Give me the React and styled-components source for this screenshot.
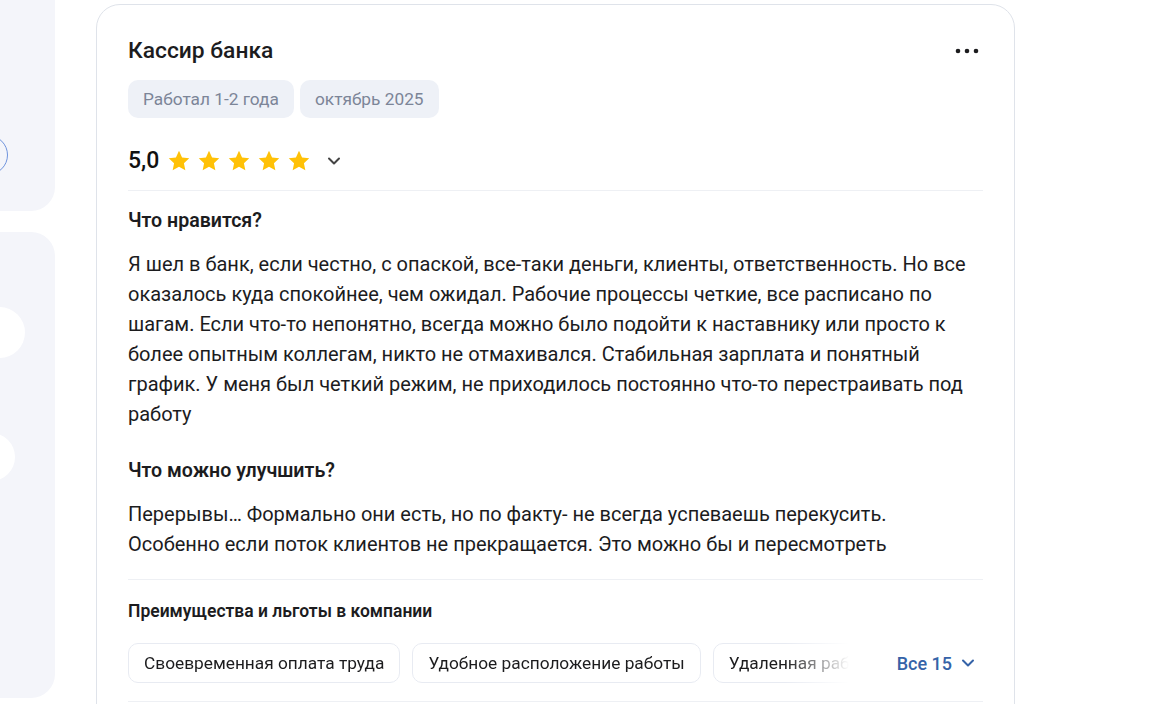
import React from "react";
import styled, { createGlobalStyle } from "styled-components";

const GlobalStyle = createGlobalStyle`
  html, body {
    margin: 0;
    padding: 0;
    background: #ffffff;
    overflow: hidden;
  }
  body {
    font-family: Roboto, "Noto Sans", "Liberation Sans", sans-serif;
    color: #1c1c1e;
  }
`;

const tags = ["Работал 1-2 года", "октябрь 2025"];
const benefits = [
  "Своевременная оплата труда",
  "Удобное расположение работы",
  "Удаленная работа",
  "Бесплатное обучение",
];

function Star() {
  return (
    <svg width="24" height="24" viewBox="0 0 24 24">
      <path
        d="M12 1.8l3.05 6.6 7.2.85-5.33 4.93 1.42 7.12L12 17.73l-6.34 3.57 1.42-7.12L1.75 9.25l7.2-.85z"
        fill="#FFC107"
      />
    </svg>
  );
}

function Chevron({ color }) {
  return (
    <svg width="20" height="20" viewBox="0 0 20 20" fill="none">
      <path
        d="M5 7.5l5 5 5-5"
        stroke={color}
        strokeWidth="2"
        strokeLinecap="round"
        strokeLinejoin="round"
      />
    </svg>
  );
}

function Dots() {
  return (
    <svg width="24" height="24" viewBox="0 0 24 24">
      <circle cx="3" cy="12" r="2.3" fill="#1c1c1e" />
      <circle cx="12" cy="12" r="2.3" fill="#1c1c1e" />
      <circle cx="21" cy="12" r="2.3" fill="#1c1c1e" />
    </svg>
  );
}

export default function App() {
  return (
    <>
      <GlobalStyle />
      <Page>
        <Side>
          <SidePanel $top>
            <OutlineCircle />
          </SidePanel>
          <SidePanel>
            <WhiteCircle $size={51} $left={19} $top={75} />
            <WhiteCircle $size={48} $left={12} $top={201} />
          </SidePanel>
        </Side>

        <Card>
          <TitleRow>
            <Title>Кассир банка</Title>
            <MoreButton>
              <Dots />
            </MoreButton>
          </TitleRow>

          <Tags>
            {tags.map((t) => (
              <Tag key={t}>{t}</Tag>
            ))}
          </Tags>

          <RatingRow>
            <Score>5,0</Score>
            <Stars>
              {[0, 1, 2, 3, 4].map((i) => (
                <Star key={i} />
              ))}
            </Stars>
            <RatingToggle>
              <Chevron color="#444" />
            </RatingToggle>
          </RatingRow>

          <Divider $top={14} />

          <Heading $top={18}>Что нравится?</Heading>
          <Body>
            Я шел в банк, если честно, с опаской, все-таки деньги, клиенты,
            ответственность. Но все оказалось куда спокойнее, чем ожидал.
            Рабочие процессы четкие, все расписано по шагам. Если что-то
            непонятно, всегда можно было подойти к наставнику или просто к более
            опытным коллегам, никто не отмахивался. Стабильная зарплата и
            понятный график. У меня был четкий режим, не приходилось постоянно
            что-то перестраивать под работу
          </Body>

          <Heading $top={30}>Что можно улучшить?</Heading>
          <Body>
            Перерывы… Формально они есть, но по факту- не всегда успеваешь
            перекусить. Особенно если поток клиентов не прекращается. Это можно
            бы и пересмотреть
          </Body>

          <Divider $top={20} />

          <SmallHeading>Преимущества и льготы в компании</SmallHeading>
          <BenefitsRow>
            <Chips>
              {benefits.map((b) => (
                <Chip key={b}>{b}</Chip>
              ))}
            </Chips>
            <ShowAll>
              Все 15
              <Chevron color="#3563a8" />
            </ShowAll>
          </BenefitsRow>

          <Divider $top={18} />
        </Card>
      </Page>
    </>
  );
}

const Page = styled.div`
  display: flex;
  align-items: flex-start;
  gap: 41px;
  height: 704px;
`;

const Side = styled.div`
  display: flex;
  flex-direction: column;
  gap: 21px;
  width: 100px;
  margin-left: -45px;
  margin-top: -100px;
  flex-shrink: 0;
`;

const SidePanel = styled.div`
  position: relative;
  height: ${(p) => (p.$top ? "311px" : "466px")};
  background: #f4f5fa;
  border-radius: 24px;
  overflow: hidden;
`;

const OutlineCircle = styled.div`
  position: absolute;
  left: 13px;
  top: 235px;
  width: 38px;
  height: 38px;
  border: 1.5px solid #6f93dc;
  border-radius: 50%;
`;

const WhiteCircle = styled.div`
  position: absolute;
  left: ${(p) => p.$left}px;
  top: ${(p) => p.$top}px;
  width: ${(p) => p.$size}px;
  height: ${(p) => p.$size}px;
  background: #ffffff;
  border-radius: 50%;
`;

const Card = styled.div`
  box-sizing: border-box;
  width: 919px;
  margin-top: 4px;
  min-height: 760px;
  padding: 32px 31px 0;
  border: 1px solid #dfe3ea;
  border-radius: 24px;
  background: #ffffff;
  flex-shrink: 0;
`;

const TitleRow = styled.div`
  display: flex;
  align-items: center;
  justify-content: space-between;
`;

const Title = styled.h2`
  margin: 0;
  font-size: 22.8px;
  line-height: 28px;
  font-weight: 500;
  color: #1c1c1e;
`;

const MoreButton = styled.button`
  display: flex;
  padding: 0;
  margin-right: 4px;
  border: none;
  background: none;
  cursor: pointer;
`;

const Tags = styled.div`
  display: flex;
  gap: 6px;
  margin-top: 15px;
`;

const Tag = styled.span`
  display: inline-flex;
  align-items: center;
  height: 38px;
  padding: 0 15px;
  border-radius: 10px;
  background: #eef1f7;
  color: #7c8598;
  font-size: 17.3px;
`;

const RatingRow = styled.div`
  display: flex;
  align-items: center;
  height: 30px;
  margin-top: 28px;
`;

const Score = styled.span`
  font-size: 23px;
  font-weight: 500;
  line-height: 30px;
  color: #111;
`;

const Stars = styled.div`
  display: flex;
  gap: 6px;
  margin-left: 8px;
`;

const RatingToggle = styled.button`
  display: flex;
  padding: 0;
  margin-left: 13px;
  border: none;
  background: none;
  cursor: pointer;
`;

const Divider = styled.div`
  height: 1px;
  margin-top: ${(p) => p.$top}px;
  background: #eef0f4;
`;

const Heading = styled.h3`
  margin: ${(p) => p.$top}px 0 0;
  font-size: 19.6px;
  line-height: 24px;
  font-weight: 600;
  color: #1c1c1e;
`;

const Body = styled.p`
  margin: 16px 0 0;
  font-size: 20px;
  line-height: 30px;
  color: #1c1c1e;
`;

const SmallHeading = styled.h4`
  margin: 21px 0 0;
  font-size: 17.5px;
  line-height: 20px;
  font-weight: 600;
  color: #1c1c1e;
`;

const BenefitsRow = styled.div`
  display: flex;
  align-items: center;
  margin-top: 22px;
`;

const Chips = styled.div`
  display: flex;
  gap: 12px;
  flex: 1;
  min-width: 0;
  overflow: hidden;
  mask-image: linear-gradient(to right, #000 calc(100% - 64px), transparent 100%);
`;

const Chip = styled.span`
  display: inline-flex;
  align-items: center;
  flex-shrink: 0;
  height: 40px;
  padding: 0 15px;
  box-sizing: border-box;
  border: 1px solid #e8ebf2;
  border-radius: 10px;
  font-size: 17.3px;
  color: #1c1c1e;
  white-space: nowrap;
`;

const ShowAll = styled.button`
  display: flex;
  align-items: center;
  gap: 6px;
  margin-left: 48px;
  padding: 0 5px 0 0;
  border: none;
  background: none;
  color: #3563a8;
  font-family: inherit;
  font-size: 18px;
  font-weight: 500;
  cursor: pointer;
`;
